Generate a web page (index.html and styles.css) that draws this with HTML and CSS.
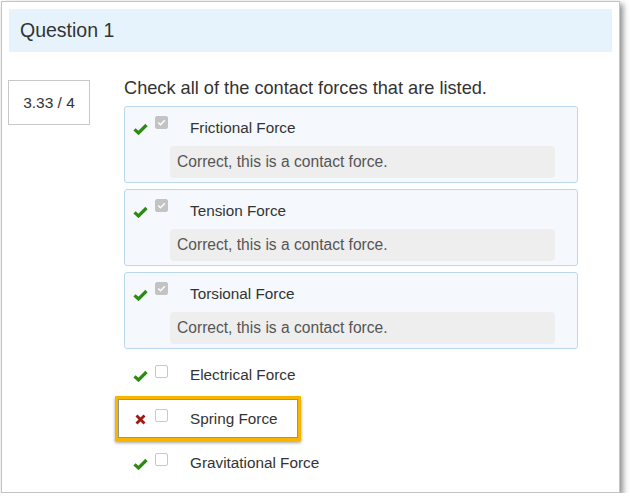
FILE: index.html
```html
<!DOCTYPE html>
<html>
<head>
<meta charset="utf-8">
<link rel="stylesheet" href="styles.css">
</head>
<body>
<div class="window">
  <div class="header">Question 1</div>
  <div class="main">
    <div class="score">3.33 / 4</div>
    <div class="question">
      <div class="prompt">Check all of the contact forces that are listed.</div>
      <div class="boxes">
        <div class="opt-box">
          <div class="row">
            <span class="mark"><svg width="15" height="12" viewBox="0 0 15 12"><path d="M1.5 6.3 L5.5 10 L13.5 2" fill="none" stroke="#2e8b12" stroke-width="3.2"/></svg></span>
            <span class="cb checked"><svg width="13" height="13" viewBox="0 0 13 13"><path d="M3.2 6.6 L5.5 8.8 L9.8 4.2" fill="none" stroke="#fff" stroke-width="1.4"/></svg></span>
            <span class="label">Frictional Force</span>
          </div>
          <div class="feedback">Correct, this is a contact force.</div>
        </div>
        <div class="opt-box">
          <div class="row">
            <span class="mark"><svg width="15" height="12" viewBox="0 0 15 12"><path d="M1.5 6.3 L5.5 10 L13.5 2" fill="none" stroke="#2e8b12" stroke-width="3.2"/></svg></span>
            <span class="cb checked"><svg width="13" height="13" viewBox="0 0 13 13"><path d="M3.2 6.6 L5.5 8.8 L9.8 4.2" fill="none" stroke="#fff" stroke-width="1.4"/></svg></span>
            <span class="label">Tension Force</span>
          </div>
          <div class="feedback">Correct, this is a contact force.</div>
        </div>
        <div class="opt-box">
          <div class="row">
            <span class="mark"><svg width="15" height="12" viewBox="0 0 15 12"><path d="M1.5 6.3 L5.5 10 L13.5 2" fill="none" stroke="#2e8b12" stroke-width="3.2"/></svg></span>
            <span class="cb checked"><svg width="13" height="13" viewBox="0 0 13 13"><path d="M3.2 6.6 L5.5 8.8 L9.8 4.2" fill="none" stroke="#fff" stroke-width="1.4"/></svg></span>
            <span class="label">Torsional Force</span>
          </div>
          <div class="feedback">Correct, this is a contact force.</div>
        </div>
      </div>
      <div class="plain">
        <div class="row prow">
          <span class="mark"><svg width="15" height="12" viewBox="0 0 15 12"><path d="M1.5 6.3 L5.5 10 L13.5 2" fill="none" stroke="#2e8b12" stroke-width="3.2"/></svg></span>
          <span class="cb"></span>
          <span class="label">Electrical Force</span>
        </div>
        <div class="row prow flagged">
          <span class="highlight"></span>
          <span class="mark xmark"><svg width="11" height="11" viewBox="0 0 11 11"><path d="M1.5 1.5 L9.5 9.5 M9.5 1.5 L1.5 9.5" fill="none" stroke="#9e1b14" stroke-width="2.8"/></svg></span>
          <span class="cb"></span>
          <span class="label">Spring Force</span>
        </div>
        <div class="row prow">
          <span class="mark"><svg width="15" height="12" viewBox="0 0 15 12"><path d="M1.5 6.3 L5.5 10 L13.5 2" fill="none" stroke="#2e8b12" stroke-width="3.2"/></svg></span>
          <span class="cb"></span>
          <span class="label">Gravitational Force</span>
        </div>
      </div>
    </div>
  </div>
</div>
</body>
</html>
```
FILE: styles.css
```css
html, body {
  margin: 0;
  padding: 0;
  background: #ffffff;
}
body {
  font-family: "Liberation Sans", Arial, sans-serif;
  color: #333333;
}
.window {
  box-sizing: border-box;
  margin: 1px 0 0 1px;
  width: 619px;
  height: 492px;
  border: 1px solid #c4c4c4;
  background: #ffffff;
  box-shadow: 3px 3px 6px rgba(0, 0, 0, 0.45);
  padding: 7px;
}
.header {
  height: 43px;
  background: #e6f3fd;
  font-size: 19.5px;
  line-height: 43px;
  padding-left: 11px;
  color: #333;
}
.main {
  display: flex;
  margin-top: 26px;
}
.score {
  box-sizing: border-box;
  width: 82px;
  height: 45px;
  margin: 2px 0 0 -1px;
  border: 1px solid #c8c8c8;
  font-size: 15.5px;
  line-height: 43px;
  text-align: center;
  color: #333;
}
.question {
  width: 454px;
  margin-left: 34px;
}
.prompt {
  font-size: 18.2px;
  line-height: 20px;
  color: #333;
}
.boxes {
  margin-top: 8px;
  display: flex;
  flex-direction: column;
  gap: 6px;
}
.opt-box {
  box-sizing: border-box;
  height: 77px;
  border: 1px solid #b9d8ef;
  border-radius: 3px;
  background: #f5f9fd;
  padding: 11px 22px 4px 8px;
}
.row {
  display: flex;
  align-items: center;
  height: 20px;
  position: relative;
}
.mark {
  width: 22px;
  height: 20px;
  display: flex;
  align-items: center;
  padding-top: 1px;
  box-sizing: border-box;
}
.xmark {
  padding-left: 2px;
}
.cb {
  box-sizing: border-box;
  width: 13px;
  height: 13px;
  align-self: flex-start;
  margin-top: -2px;
  border: 1px solid #c9c9c9;
  border-radius: 2px;
  background: #fff;
  display: flex;
}
.cb.checked {
  background: #c3c3c3;
  border-color: #c3c3c3;
}
.cb svg {
  margin: -1px;
}
.label {
  margin-left: 22px;
  font-size: 15.3px;
  line-height: 20px;
  color: #333;
}
.feedback {
  margin: 8px 0 0 37px;
  height: 32px;
  line-height: 32px;
  background: #eeeeee;
  border-radius: 4px;
  padding-left: 7px;
  font-size: 15.6px;
  color: #555;
}
.plain {
  margin-top: 4px;
}
.prow {
  height: 44px;
  padding-left: 9px;
}
.prow .cb {
  align-self: auto;
  margin-top: -7px;
}
.highlight {
  position: absolute;
  left: -9px;
  top: -1px;
  width: 186px;
  height: 45px;
  box-sizing: border-box;
  border: 3px solid #f8b500;
  box-shadow: inset 0 0 0 1px rgba(60, 60, 60, 0.55), 0 2px 3px rgba(0, 0, 0, 0.35);
  pointer-events: none;
}
```
